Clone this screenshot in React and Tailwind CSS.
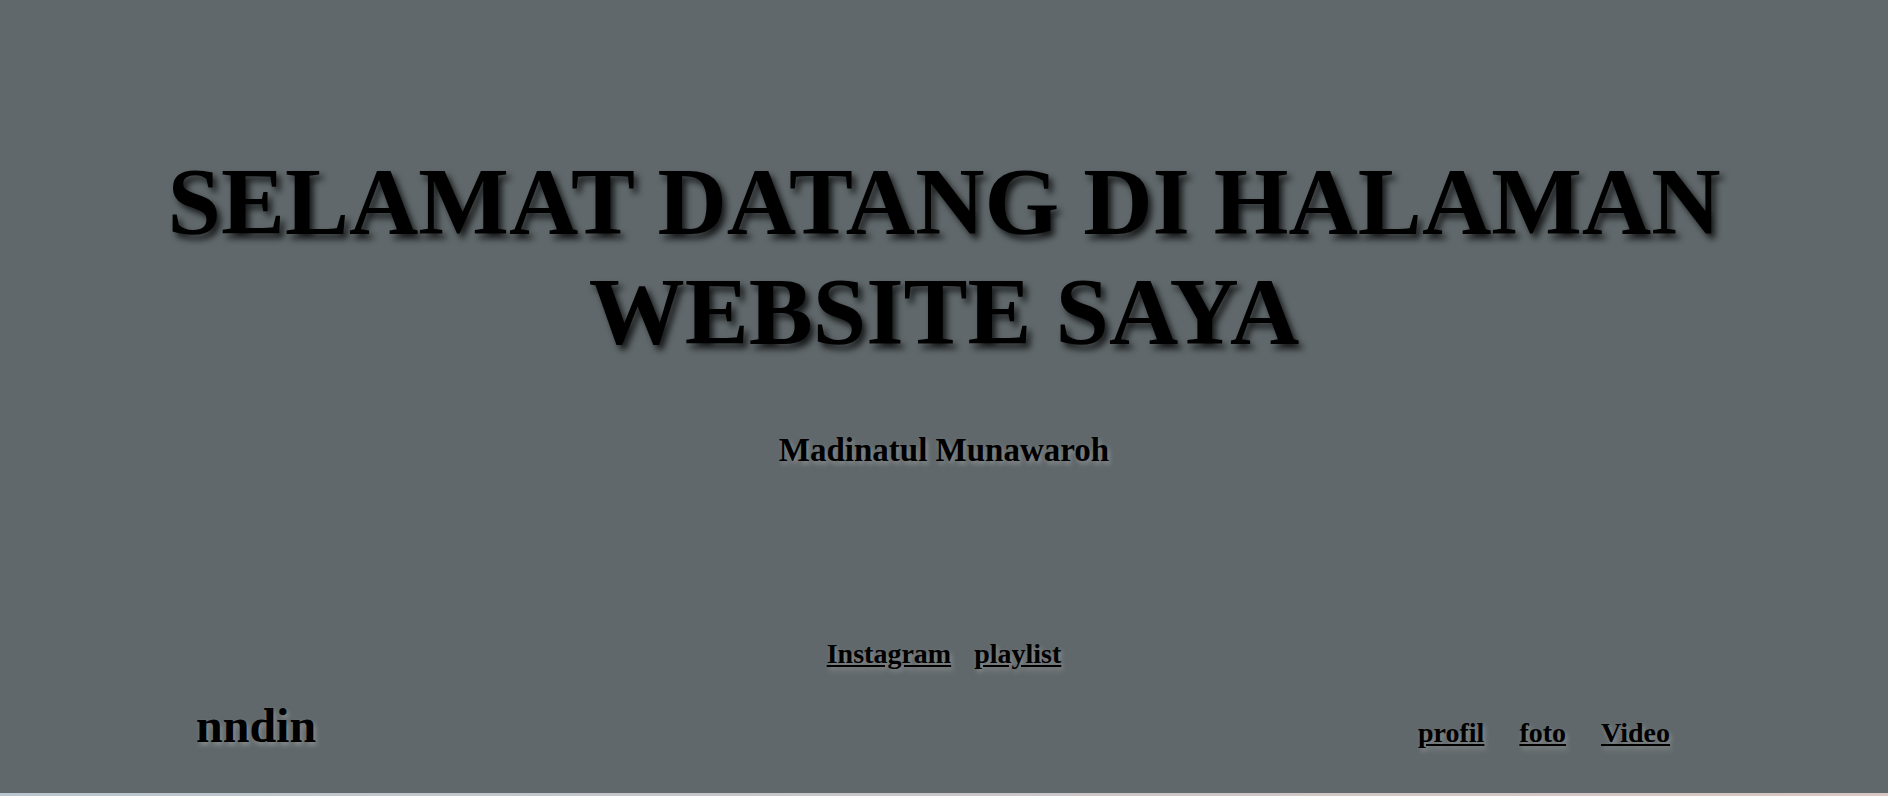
import React from 'react';

const App = () => {
  const serif = { fontFamily: '"Liberation Serif", "Times New Roman", serif' };

  return (
    <div className="w-full bg-[#60686b] text-black" style={serif}>
      <section className="h-[793px] flex flex-col">
        {/* HERO TITLE */}
        <h1 className="pt-[147px] text-center text-[96px] font-bold leading-[1.149] [text-shadow:4px_5px_6px_rgba(0,0,0,0.75)]">
          SELAMAT DATANG DI HALAMAN
          <br />
          WEBSITE SAYA
        </h1>

        <h2 className="mt-[58px] text-center text-[33px] font-bold [text-shadow:2px_3px_5px_rgba(160,160,160,0.7)]">
          Madinatul Munawaroh
        </h2>

        {/* SOCIAL LINKS */}
        <div className="mt-[158px] flex justify-center gap-[23px] text-[28px] font-bold [text-shadow:2px_3px_5px_rgba(160,160,160,0.7)]">
          <a href="#" className="underline">Instagram</a>
          <a href="#" className="underline">playlist</a>
        </div>

        {/* FOOTER NAV */}
        <div className="mt-[15px] flex items-baseline justify-between pl-[196px] pr-[218px]">
          <span className="text-[48px] font-bold [text-shadow:2px_3px_5px_rgba(160,160,160,0.7)]">
            nndin
          </span>
          <nav className="flex gap-[35px] text-[28px] font-bold [text-shadow:2px_3px_5px_rgba(160,160,160,0.7)]">
            <a href="#" className="underline">profil</a>
            <a href="#" className="underline">foto</a>
            <a href="#" className="underline">Video</a>
          </nav>
        </div>
      </section>
      <div className="h-[3px] bg-gradient-to-r from-[#bac6ce] to-[#d8c6c2]" />
    </div>
  );
};

export default App;
